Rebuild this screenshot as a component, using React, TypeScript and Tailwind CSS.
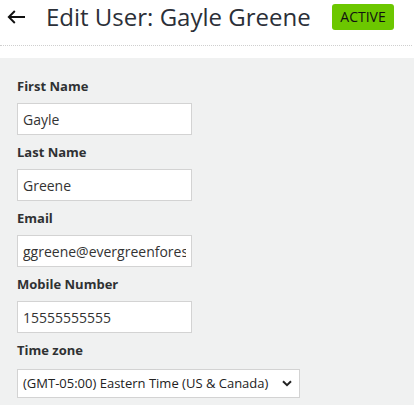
import React from 'react';

const fields = [
  { label: 'First Name', value: 'Gayle' },
  { label: 'Last Name', value: 'Greene' },
  { label: 'Email', value: 'ggreene@evergreenforest.com' },
  { label: 'Mobile Number', value: '15555555555' },
];

export default function App() {
  return (
    <div className="min-h-[405px] bg-white text-[#333] font-['Open_Sans',sans-serif]">
      {/* Header */}
      <div className="flex h-[46px] w-[412px] items-center border-b border-dotted border-[#cfcfcf] pb-[11px]">
        <button className="ml-[7px] flex h-[18px] w-[18px] items-center justify-center">
          <svg width="18" height="14" viewBox="0 0 18 14" fill="none">
            <path d="M18 7H2M7.8 1L1.8 7l6 6" stroke="#111" strokeWidth="1.9" />
          </svg>
        </button>
        <h1 className="ml-[21px] text-[24px] leading-none text-[#2b2f38]">Edit User: Gayle Greene</h1>
        <span className="ml-auto mr-[18px] w-[62px] rounded-[3px] bg-[#6cc700] py-[4px] text-center text-[14px] leading-[18px] text-[#111]">
          ACTIVE
        </span>
      </div>

      {/* Form */}
      <div className="mt-[12px] bg-[#f0f1f1] px-[17px] pt-[19px] pb-[10px]">
        {fields.map((f) => (
          <div key={f.label} className="mb-[8px]">
            <label className="block text-[13px] font-bold leading-[18px] text-[#2f3133]">{f.label}</label>
            <input
              readOnly
              value={f.value}
              className="mt-[8px] block h-[32px] w-[175px] border border-[#d3d3d3] bg-white px-[5px] text-[14px] text-[#333] outline-none"
            />
          </div>
        ))}
        <div>
          <label className="block text-[13px] font-bold leading-[18px] text-[#2f3133]">Time zone</label>
          <div className="relative mt-[10px] w-[283px]">
            <select className="block h-[29px] w-full appearance-none border border-[#d3d3d3] bg-white pl-[5px] pr-[24px] text-[13px] text-[#222] outline-none">
              <option>(GMT-05:00) Eastern Time (US &amp; Canada)</option>
            </select>
            <svg
              className="pointer-events-none absolute right-[8px] top-[11px]"
              width="10"
              height="7"
              viewBox="0 0 10 7"
              fill="none"
            >
              <path d="M1 1.2l4 4 4-4" stroke="#222" strokeWidth="2" />
            </svg>
          </div>
        </div>
      </div>
    </div>
  );
}
